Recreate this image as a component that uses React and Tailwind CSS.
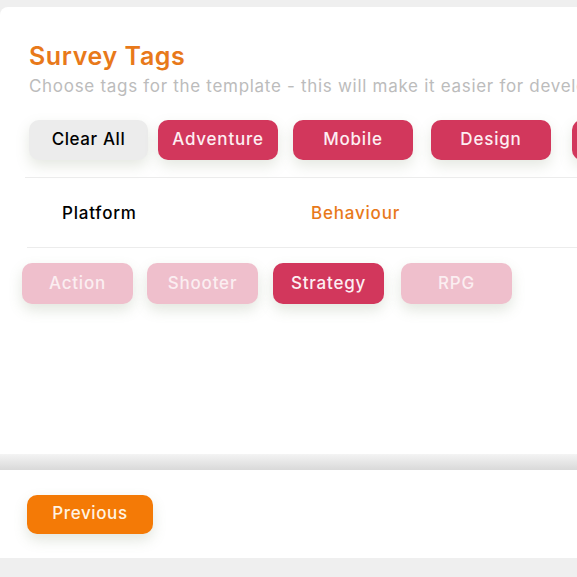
export default function App() {
  const font = { fontFamily: "Inter, 'Noto Sans', sans-serif" };
  const top = [
    { t: "Adventure", m: "" },
    { t: "Mobile", m: "ml-[15px]" },
    { t: "Design", m: "ml-[18px]" },
    { t: "Casual", m: "ml-[21px]" },
  ];
  const bottom = [
    { t: "Action", on: false, m: "" },
    { t: "Shooter", on: false, m: "ml-[14px]" },
    { t: "Strategy", on: true, m: "ml-[15px]" },
    { t: "RPG", on: false, m: "ml-[17px]" },
  ];
  return (
    <div className="h-[577px] w-[577px] overflow-hidden bg-[#efefef] pt-[7px]" style={font}>
      <div className="flex h-[447px] w-[900px] flex-col rounded-tl-lg bg-white pl-[29px] pt-[34px]">
        <h1 className="text-[25px] font-semibold leading-[30px] tracking-[0.6px] text-[#e8791a]">Survey Tags</h1>
        <p className="mt-[3px] whitespace-nowrap text-[17px] leading-[24px] tracking-[0.7px] text-[#bcbcbc]">
          Choose tags for the template - this will make it easier for developers to find
        </p>
        <div className="mt-[22px] flex">
          <button className="flex h-[40px] w-[119px] items-center justify-center rounded-[10px] bg-[#ececec] text-[17px] font-medium tracking-[0.6px] text-black shadow-[0_6px_14px_rgba(110,130,90,0.18)]">
            Clear All
          </button>
          <div className="ml-[10px] flex">
            {top.map((b) => (
              <button
                key={b.t}
                className={`flex h-[40px] w-[120px] items-center justify-center rounded-[10px] bg-[#d2375c] text-[17px] font-medium tracking-[0.8px] text-[#fdeef2] shadow-[0_6px_14px_rgba(110,130,90,0.18)] ${b.m}`}
              >
                {b.t}
              </button>
            ))}
          </div>
        </div>
        <div className="ml-[-4px] mt-[17px] h-px bg-[#ececec]" />
        <div className="flex h-[69px] items-center pt-[2px]">
          <div className="w-[282px] pl-[33px] text-[17px] font-medium tracking-[0.8px] text-black">Platform</div>
          <div className="text-[17px] font-medium tracking-[0.8px] text-[#e8791a]">Behaviour</div>
        </div>
        <div className="ml-[-2px] h-px bg-[#ececec]" />
        <div className="ml-[-7px] mt-[15px] flex">
          {bottom.map((b) => (
            <button
              key={b.t}
              className={`flex h-[41px] w-[111px] items-center justify-center rounded-[10px] text-[17px] font-medium tracking-[0.8px] shadow-[0_6px_14px_rgba(110,130,90,0.2)] ${b.m} ${
                b.on ? "bg-[#d2375c] text-[#fdeef2]" : "bg-[#efbfcc] text-[#fbeef1]"
              }`}
            >
              {b.t}
            </button>
          ))}
        </div>
      </div>
      <div className="h-[16px] w-full bg-gradient-to-b from-[#f4f4f4] to-[#d9d9d9]" />
      <div className="flex h-[88px] w-full items-center bg-white pl-[27px]">
        <button className="flex h-[39px] w-[126px] items-center justify-center rounded-[10px] bg-[#f47a06] text-[17px] font-medium tracking-[0.6px] text-[#fff3e3] shadow-[0_6px_14px_rgba(110,130,90,0.2)]">
          Previous
        </button>
      </div>
    </div>
  );
}
